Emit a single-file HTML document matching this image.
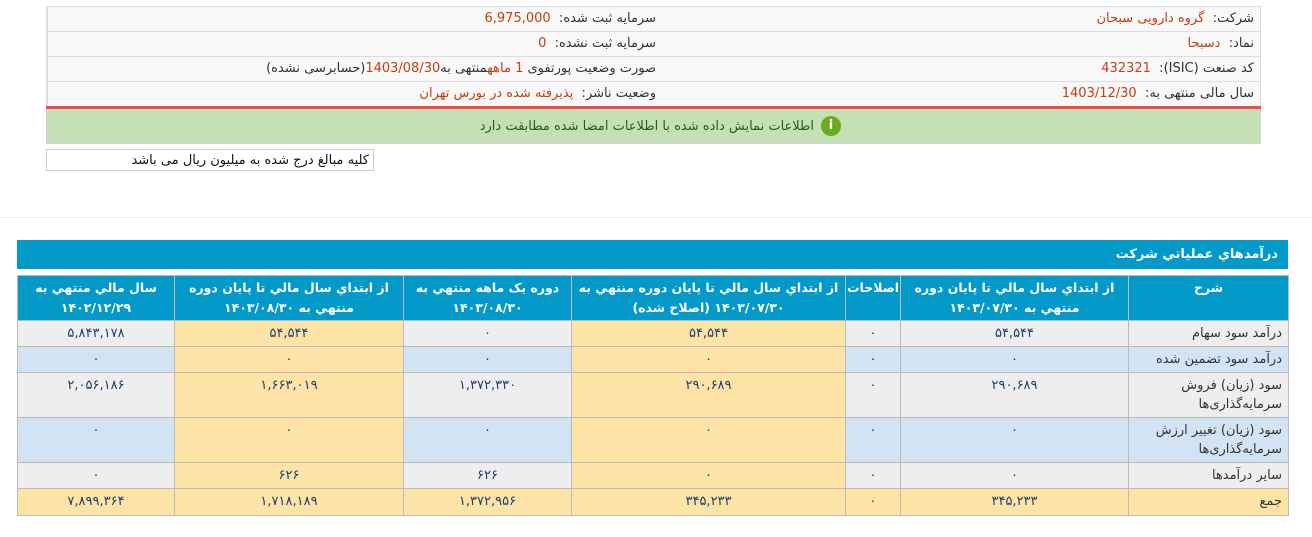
<!DOCTYPE html>
<html><head><meta charset="utf-8">
<style>
*{box-sizing:border-box;margin:0;padding:0}
body{width:1312px;height:537px;background:#fff;font-family:"DejaVu Sans","Liberation Sans",sans-serif;font-size:12px;color:#333;position:relative;overflow:hidden}
.info{position:absolute;left:46px;top:6px;width:1215px;height:101px;border:1px solid #ddd;background:#f8f8f8;direction:rtl;font-size:13px}
.info .r{height:25px;border-bottom:1px solid #ddd;display:flex}
.info .r:last-child{border-bottom:none}
.info .c{height:100%;line-height:24px;padding-right:6px;white-space:nowrap}
.info .c1{width:618px;border-left:1px solid #ddd;padding-right:9px}
.info .c2{flex:1}
.v{color:#c0400f}
.red{position:absolute;left:46px;top:106px;width:1215px;height:3px;background:#f04c4c}
.green{position:absolute;left:46px;top:109px;width:1215px;height:35px;background:#c3e1b4;border:1px solid #cfcfcf;border-top:none;direction:rtl;line-height:36px;color:#2a5a1a;font-size:13px}
.green .ic{position:absolute;right:419px;top:7px;width:20px;height:20px;border-radius:50%;background:#6aaa1e;color:#fff;text-align:center;line-height:20px;font-weight:bold;font-size:13px}
.green span.t{position:absolute;right:446px;top:0}
.note{position:absolute;left:46px;top:149px;width:328px;height:22px;border:1px solid #ccc;direction:rtl;padding-right:4px;line-height:21px;color:#111;font-size:13px}
.sep{position:absolute;left:0;top:217px;width:1312px;height:1px;background:#eee}
.hdr{position:absolute;left:17px;top:240px;width:1271px;height:29px;background:#0399c9;color:#fff;font-weight:bold;direction:rtl;padding-right:10px;line-height:29px;font-size:13px}
table{position:absolute;left:17px;top:275px;border-collapse:collapse;direction:rtl;table-layout:fixed;width:1271px;font-size:13px}
td,th{border:1px solid #bbb;color:#1c3f6e;text-align:center;vertical-align:top;padding-top:3px;line-height:19px}
th{background:#0399c9;color:#fff;font-weight:bold;height:45px;padding-top:2px;line-height:20px;font-size:12.5px}
td.l{text-align:right;padding-right:6px;color:#333}
.g td{background:#eee}.b td{background:#d2e4f3}
td.y,.t td{background:#fde3a6}
</style></head><body>
<div class="info">
<div class="r"><div class="c c2">شرکت: &nbsp;<span class="v">گروه دارویی سبحان</span></div><div class="c c1">سرمایه ثبت شده: &nbsp;<span class="v">6,975,000</span></div></div>
<div class="r"><div class="c c2">نماد: &nbsp;<span class="v">دسبحا</span></div><div class="c c1">سرمایه ثبت نشده: &nbsp;<span class="v">0</span></div></div>
<div class="r"><div class="c c2">کد صنعت (ISIC): &nbsp;<span class="v">432321</span></div><div class="c c1">صورت وضعیت پورتفوی <span class="v">1 ماهه</span>منتهی به<span class="v">1403/08/30</span>(حسابرسی نشده)</div></div>
<div class="r"><div class="c c2">سال مالی منتهی به: &nbsp;<span class="v">1403/12/30</span></div><div class="c c1">وضعیت ناشر: &nbsp;<span class="v">پذیرفته شده در بورس تهران</span></div></div>
</div>
<div class="red"></div>
<div class="green"><div class="ic">i</div><span class="t">اطلاعات نمایش داده شده با اطلاعات امضا شده مطابقت دارد</span></div>
<div class="note">کلیه مبالغ درج شده به میلیون ریال می باشد</div>
<div class="sep"></div>
<div class="hdr">درآمدهاي عملياتي شرکت</div>
<table>
<colgroup><col style="width:160px"><col style="width:228px"><col style="width:55px"><col style="width:274px"><col style="width:168px"><col style="width:229px"><col style="width:157px"></colgroup>
<tr><th>شرح</th><th>از ابتداي سال مالي تا پايان دوره منتهي به ۱۴۰۳/۰۷/۳۰</th><th>اصلاحات</th><th>از ابتداي سال مالي تا پايان دوره منتهي به ۱۴۰۳/۰۷/۳۰ (اصلاح شده)</th><th>دوره يک ماهه منتهي به ۱۴۰۳/۰۸/۳۰</th><th>از ابتداي سال مالي تا پايان دوره منتهي به ۱۴۰۳/۰۸/۳۰</th><th>سال مالي منتهي به ۱۴۰۲/۱۲/۲۹</th></tr>
<tr class="g" style="height:26px"><td class="l">درآمد سود سهام</td><td>۵۴,۵۴۴</td><td>۰</td><td class="y">۵۴,۵۴۴</td><td>۰</td><td class="y">۵۴,۵۴۴</td><td>۵,۸۴۳,۱۷۸</td></tr>
<tr class="b" style="height:26px"><td class="l">درآمد سود تضمین شده</td><td>۰</td><td>۰</td><td class="y">۰</td><td>۰</td><td class="y">۰</td><td>۰</td></tr>
<tr class="g" style="height:45px"><td class="l">سود (زیان) فروش سرمایه‌گذاری‌ها</td><td>۲۹۰,۶۸۹</td><td>۰</td><td class="y">۲۹۰,۶۸۹</td><td>۱,۳۷۲,۳۳۰</td><td class="y">۱,۶۶۳,۰۱۹</td><td>۲,۰۵۶,۱۸۶</td></tr>
<tr class="b" style="height:45px"><td class="l">سود (زیان) تغییر ارزش سرمایه‌گذاری‌ها</td><td>۰</td><td>۰</td><td class="y">۰</td><td>۰</td><td class="y">۰</td><td>۰</td></tr>
<tr class="g" style="height:26px"><td class="l">سایر درآمدها</td><td>۰</td><td>۰</td><td class="y">۰</td><td>۶۲۶</td><td class="y">۶۲۶</td><td>۰</td></tr>
<tr class="t" style="height:27px"><td class="l">جمع</td><td>۳۴۵,۲۳۳</td><td>۰</td><td>۳۴۵,۲۳۳</td><td>۱,۳۷۲,۹۵۶</td><td>۱,۷۱۸,۱۸۹</td><td>۷,۸۹۹,۳۶۴</td></tr>
</table>
</body></html>
